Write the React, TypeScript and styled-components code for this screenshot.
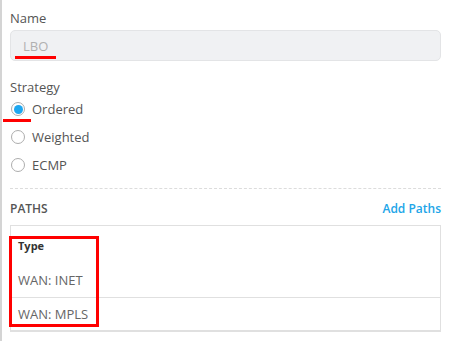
import styled, { createGlobalStyle } from "styled-components";

const GlobalStyle = createGlobalStyle`
  html, body {
    margin: 0;
    padding: 0;
    background: #fff;
  }
  body {
    font-family: "Open Sans", "Liberation Sans", sans-serif;
    font-size: 13px;
    color: #555;
  }
`;

const Panel = styled.div`
  position: relative;
  width: 449px;
  height: 341px;
  box-sizing: border-box;
  border-left: 2px solid #d4d4d4;
  padding: 9px 8px 0 8px;
`;

const Label = styled.div`
  line-height: 18px;
  color: #555;
`;

const Field = styled.div`
  position: relative;
  margin-top: 3px;
  height: 31px;
  box-sizing: border-box;
  background: #f0f1f3;
  border: 1px solid #e3e4e6;
  border-radius: 5px;
  display: flex;
  align-items: center;
  padding: 0 12px;
  color: #b0b0b0;
`;

const Section = styled.div`
  margin-top: 17px;
`;

const RadioList = styled.div`
  display: flex;
  flex-direction: column;
  gap: 10px;
  margin-top: 4px;
`;

const RadioRow = styled.label`
  position: relative;
  display: flex;
  align-items: center;
  gap: 7px;
  height: 18px;
  color: #555;
`;

const Circle = styled.span<{ checked: boolean }>`
  width: 14px;
  height: 14px;
  box-sizing: border-box;
  border-radius: 50%;
  border: 1px solid #adadad;
  display: flex;
  align-items: center;
  justify-content: center;
  margin-left: 1px;

  &::after {
    content: "";
    width: 9px;
    height: 9px;
    border-radius: 50%;
    background: ${(p) => (p.checked ? "#1ea7f0" : "transparent")};
  }
`;

const Divider = styled.hr`
  border: none;
  border-top: 1px dashed #dcdcdc;
  margin: 14px 0 0 0;
`;

const PathsHeader = styled.div`
  display: flex;
  justify-content: space-between;
  align-items: center;
  margin-top: 10px;
  height: 18px;
`;

const SectionTitle = styled.span`
  font-weight: 600;
  font-size: 12px;
  color: #555;
`;

const LinkButton = styled.span`
  color: #21a5e8;
  font-size: 12px;
  font-weight: 600;
`;

const Table = styled.div`
  position: relative;
  margin-top: 8px;
  border: 1px solid #e0e0e0;
  border-bottom-width: 2px;
`;

const HeadCell = styled.div`
  padding: 12px 7px 0 7px;
  height: 37px;
  box-sizing: border-box;
  font-size: 11px;
  font-weight: 700;
  color: #333;
`;

const Row = styled.div<{ last?: boolean }>`
  height: ${(p) => (p.last ? 32 : 35)}px;
  box-sizing: border-box;
  display: flex;
  align-items: center;
  padding: 0 7px;
  color: #666;
  border-bottom: ${(p) => (p.last ? "none" : "1px solid #e0e0e0")};
`;

const Underline = styled.span<{ left: number; top: number; width: number }>`
  position: absolute;
  left: ${(p) => p.left}px;
  top: ${(p) => p.top}px;
  width: ${(p) => p.width}px;
  height: 3px;
  background: #f00;
`;

const Highlight = styled.span`
  position: absolute;
  left: -2px;
  top: 10px;
  width: 90px;
  height: 91px;
  box-sizing: border-box;
  border: 3px solid #f00;
`;

const strategies = ["Ordered", "Weighted", "ECMP"];
const paths = ["WAN: INET", "WAN: MPLS"];

export default function App() {
  return (
    <>
      <GlobalStyle />
      <Panel>
        <Label>Name</Label>
        <Field>
          LBO
          <Underline left={4} top={25} width={41} />
        </Field>
        <Section>
          <Label>Strategy</Label>
          <RadioList>
            {strategies.map((s, i) => (
              <RadioRow key={s}>
                <Circle checked={i === 0} />
                {s}
                {i === 0 && <Underline left={-7} top={19} width={28} />}
              </RadioRow>
            ))}
          </RadioList>
        </Section>
        <Divider />
        <PathsHeader>
          <SectionTitle>PATHS</SectionTitle>
          <LinkButton>Add Paths</LinkButton>
        </PathsHeader>
        <Table>
          <HeadCell>Type</HeadCell>
          {paths.map((p, i) => (
            <Row key={p} last={i === paths.length - 1}>
              {p}
            </Row>
          ))}
          <Highlight />
        </Table>
      </Panel>
    </>
  );
}
